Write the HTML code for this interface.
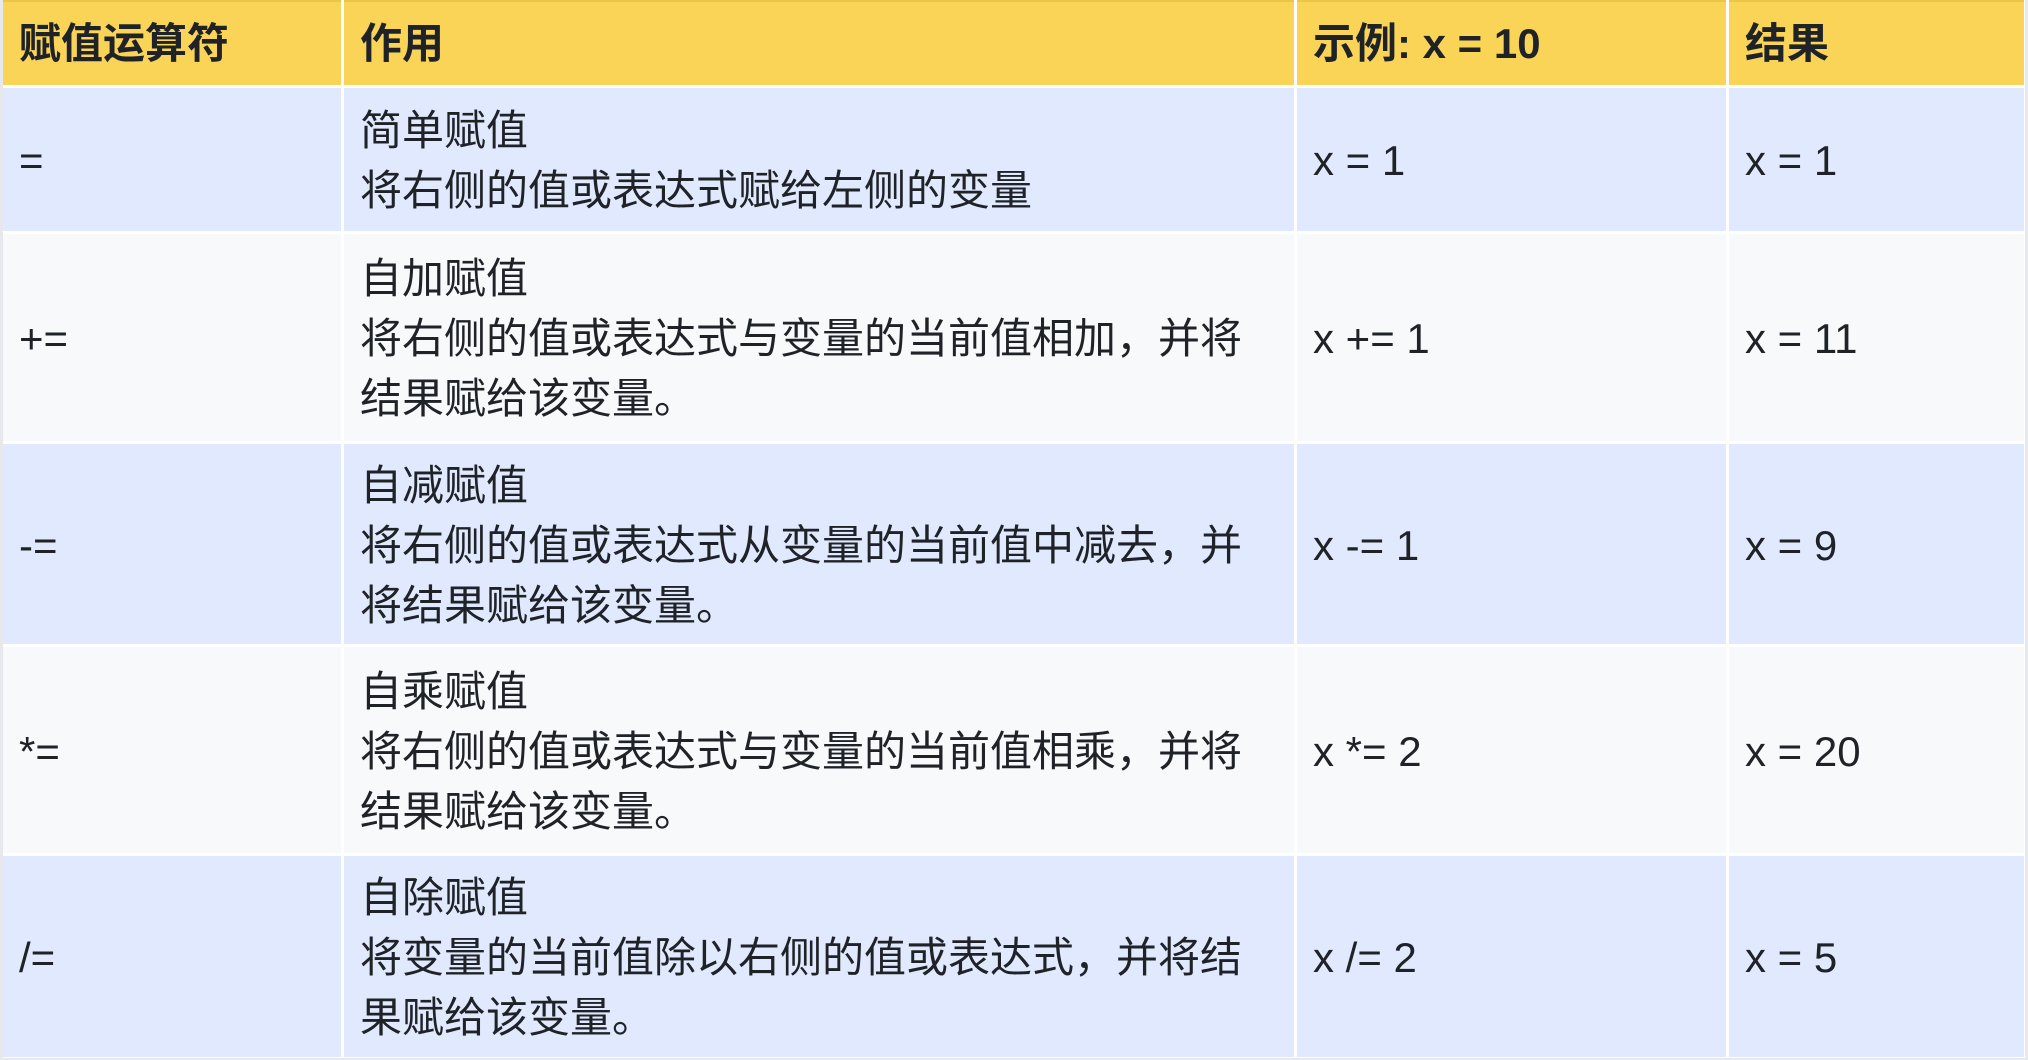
<!DOCTYPE html>
<html><head><meta charset="utf-8"><style>
html,body{margin:0;padding:0;}
body{width:2028px;height:1060px;background:#e6e8eb;position:relative;overflow:hidden;font-family:"Liberation Sans","Noto Sans CJK SC",sans-serif;color:#1f2328;}
.t{position:absolute;left:3px;top:0;width:2022px;height:1058px;background:#fff;}
.c{position:absolute;display:flex;align-items:center;box-sizing:border-box;padding-left:16px;padding-top:3px;font-size:42px;line-height:60px;white-space:nowrap;}
.h{background:#f9d456;font-weight:bold;font-size:42px;border-top:2px solid #e9c548;padding-top:0;}
.o{background:#e0e9fd;}
.e{background:#f7f9fb;}
</style></head><body>
<div class="t"></div>
<div class="c h" style="left:3px;top:0;width:338px;height:85px">赋值运算符</div>
<div class="c h" style="left:344px;top:0;width:950px;height:85px">作用</div>
<div class="c h" style="left:1297px;top:0;width:429px;height:85px">示例: x = 10</div>
<div class="c h" style="left:1729px;top:0;width:295px;height:85px">结果</div>
<div class="c o" style="left:3px;top:88px;width:338px;height:143px">=</div>
<div class="c o" style="left:344px;top:88px;width:950px;height:143px"><div>简单赋值<br>将右侧的值或表达式赋给左侧的变量</div></div>
<div class="c o" style="left:1297px;top:88px;width:429px;height:143px">x = 1</div>
<div class="c o" style="left:1729px;top:88px;width:295px;height:143px">x = 1</div>
<div class="c e" style="left:3px;top:234px;width:338px;height:207px">+=</div>
<div class="c e" style="left:344px;top:234px;width:950px;height:207px"><div>自加赋值<br>将右侧的值或表达式与变量的当前值相加，并将<br>结果赋给该变量。</div></div>
<div class="c e" style="left:1297px;top:234px;width:429px;height:207px">x += 1</div>
<div class="c e" style="left:1729px;top:234px;width:295px;height:207px">x = 11</div>
<div class="c o" style="left:3px;top:444px;width:338px;height:200px">-=</div>
<div class="c o" style="left:344px;top:444px;width:950px;height:200px"><div>自减赋值<br>将右侧的值或表达式从变量的当前值中减去，并<br>将结果赋给该变量。</div></div>
<div class="c o" style="left:1297px;top:444px;width:429px;height:200px">x -= 1</div>
<div class="c o" style="left:1729px;top:444px;width:295px;height:200px">x = 9</div>
<div class="c e" style="left:3px;top:647px;width:338px;height:206px">*=</div>
<div class="c e" style="left:344px;top:647px;width:950px;height:206px"><div>自乘赋值<br>将右侧的值或表达式与变量的当前值相乘，并将<br>结果赋给该变量。</div></div>
<div class="c e" style="left:1297px;top:647px;width:429px;height:206px">x *= 2</div>
<div class="c e" style="left:1729px;top:647px;width:295px;height:206px">x = 20</div>
<div class="c o" style="left:3px;top:856px;width:338px;height:201px">/=</div>
<div class="c o" style="left:344px;top:856px;width:950px;height:201px"><div>自除赋值<br>将变量的当前值除以右侧的值或表达式，并将结<br>果赋给该变量。</div></div>
<div class="c o" style="left:1297px;top:856px;width:429px;height:201px">x /= 2</div>
<div class="c o" style="left:1729px;top:856px;width:295px;height:201px">x = 5</div>
</body></html>
